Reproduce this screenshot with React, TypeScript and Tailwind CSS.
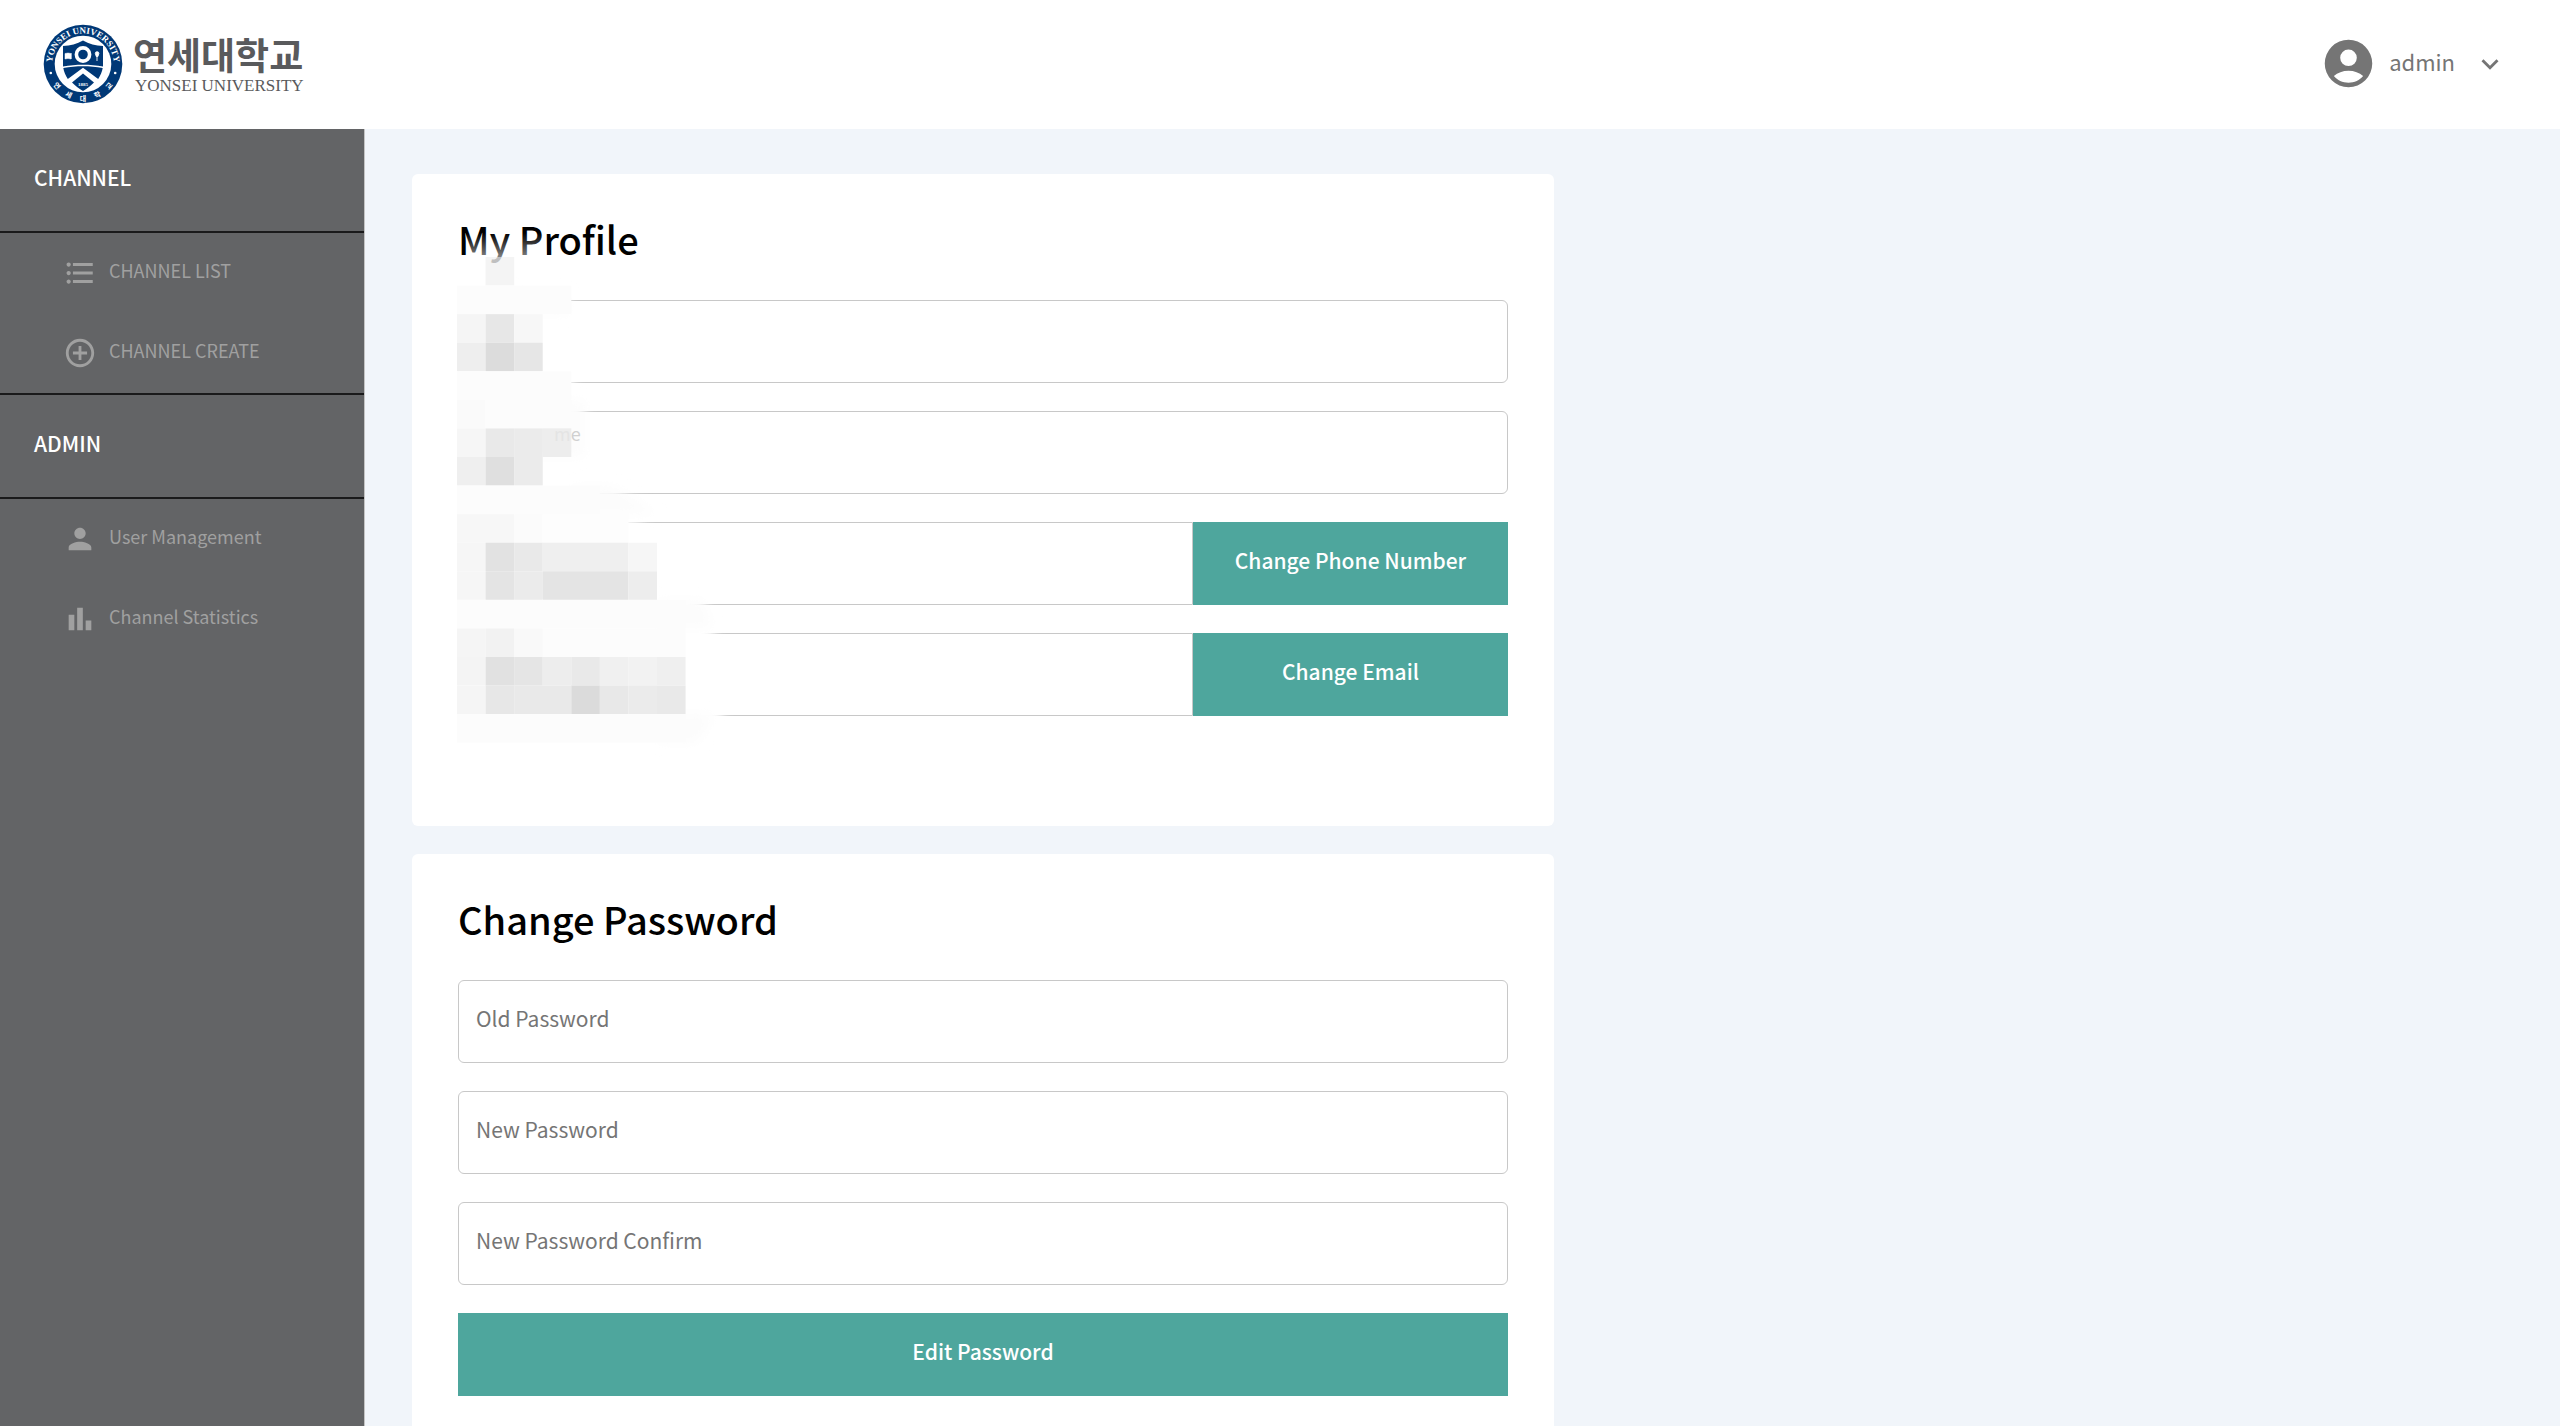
import type { ReactNode } from "react";
import { MdAddCircleOutline, MdExpandMore, MdFormatListBulleted, MdPerson } from "react-icons/md";

const BarChartIcon = () => (
  <svg viewBox="0 0 24 24" className="size-[34px]" fill="currentColor" aria-hidden="true">
    <path d="M4 9h4v11H4zm12 4h4v7h-4zm-6-9h4v16h-4z" />
  </svg>
);

const AccountIcon = () => (
  <svg viewBox="0 0 24 24" className="size-[57px]" fill="currentColor" fillRule="evenodd" aria-hidden="true">
    <path d="M12 2a10 10 0 1 0 0 20 10 10 0 0 0 0-20zm0 4.1a3.5 3.5 0 1 1 0 7 3.5 3.5 0 0 1 0-7zM5.85 17.3C7.4 15.8 9.6 15 12 15s4.6.8 6.15 2.3C16.7 19.1 14.5 20.1 12 20.1s-4.7-1-6.15-2.8z" />
  </svg>
);

const ringLetters: [string, number][] = [
  ["연", 50],
  ["세", 25],
  ["대", 0],
  ["학", -25],
  ["교", -50],
];

const Emblem = () => (
  <svg viewBox="0 0 80 80" className="size-20" aria-hidden="true">
    <defs>
      <path id="arcTop" d="M9.5 46 A31 31 0 1 1 70.5 46" />
    </defs>
    <circle cx="40" cy="40" r="39.3" fill="#003876" />
    <circle cx="40" cy="40" r="28.3" fill="#fff" />
    <text fill="#fff" fontSize="9" fontWeight="700" fontFamily="Liberation Serif, serif" textAnchor="middle">
      <textPath href="#arcTop" startOffset="50%">YONSEI UNIVERSITY</textPath>
    </text>
    {ringLetters.map(([letter, angle]) => (
      <text
        key={letter}
        x="40"
        y="76.5"
        transform={`rotate(${angle} 40 40)`}
        fill="#fff"
        fontSize="7"
        fontWeight="700"
        fontFamily="Noto Sans CJK KR, sans-serif"
        textAnchor="middle"
      >
        {letter}
      </text>
    ))}
    <circle cx="7.8" cy="49" r="1.3" fill="#fff" />
    <circle cx="72.2" cy="49" r="1.3" fill="#fff" />
    <path d="M40 16.5c6 3.6 12.6 5.300 20 5.5v20.5c-13-2.500-27-2.500-40 0V22c7.400-.2 14-1.900 20-5.500z" fill="#003876" />
    <path d="M20.300 44c13-2.200 26.400-2.200 39.400 0-.6 3.800-2.200 7-4.500 11L40 43.800 24.800 55c-2.300-4-3.900-7.200-4.500-11z" fill="#003876" />
    <path d="M40 49.500 51 58.500C47.500 62 43.800 65 40 67c-3.800-2-7.500-5-11-8.500z" fill="#003876" />
    <circle cx="40" cy="30.5" r="6.6" fill="none" stroke="#fff" strokeWidth="3.6" />
    <path d="M22 29.500l3-.5 3 .5v5.500l-3-.5-3 .5zM28.500 29v6" stroke="#fff" strokeWidth=".5" fill="#fff" />
    <path d="M54 32v5M52.300 29.500a1.800 1.800 0 1 1 3.600 0l-1 3h-1.600z" stroke="#fff" strokeWidth=".9" fill="#fff" />
    <text x="40" y="61.5" fill="#fff" fontSize="5" fontWeight="700" fontFamily="Liberation Serif, serif" textAnchor="middle">1885</text>
  </svg>
);

const Header = () => (
  <header className="flex h-[129px] items-center justify-between bg-white pr-[53px] pb-[2px] pl-[43px]">
    <a href="#" className="flex items-center gap-[10px] text-[#595a5c]">
      <Emblem />
      <span className="flex flex-col pt-[6px]">
        <span className="font-['Liberation_Sans','Noto_Sans_CJK_KR',sans-serif] text-[37px] leading-[38px] font-bold">
          연세대학교
        </span>
        <span className="pl-[2px] font-['Liberation_Serif',serif] text-[17px] leading-[18px]">YONSEI UNIVERSITY</span>
      </span>
    </a>
    <button type="button" className="flex items-center text-[#757575]">
      <AccountIcon />
      <span className="ml-3 pb-[6px] text-[22px] leading-8">admin</span>
      <MdExpandMore className="ml-[18px] size-[34px]" />
    </button>
  </header>
);

const NavSection = ({ title, children }: { title: string; children: ReactNode }) => (
  <section>
    <h2 className="flex h-[104px] items-center border-b-2 border-[#1a1a1b] pb-[6px] pl-[34px] text-[21px] leading-8 font-medium text-white">
      {title}
    </h2>
    <ul>{children}</ul>
  </section>
);

const NavItem = ({ icon, label }: { icon: ReactNode; label: string }) => (
  <li>
    <a href="#" className="flex h-20 items-center gap-3 pl-[63px] text-[#a0a0a0]">
      {icon}
      <span className="pb-[6px] text-[18px] leading-6">{label}</span>
    </a>
  </li>
);

const Sidebar = () => (
  <nav className="w-[365px] shrink-0 border-r border-[#c4c4c4] bg-[#636466]">
    <NavSection title="CHANNEL">
      <NavItem icon={<MdFormatListBulleted className="size-[34px]" />} label="CHANNEL LIST" />
      <NavItem icon={<MdAddCircleOutline className="size-[34px]" />} label="CHANNEL CREATE" />
    </NavSection>
    <div className="border-t-2 border-[#1a1a1b]">
      <NavSection title="ADMIN">
        <NavItem icon={<MdPerson className="size-[34px]" />} label="User Management" />
        <NavItem icon={<BarChartIcon />} label="Channel Statistics" />
      </NavSection>
    </div>
  </nav>
);

const CELL = 200 / 7;

// column, row, columns wide, shade
const cells: [number, number, number, string][] = [
  [1, 0, 1, "#f0f0f0"],
  [0, 1, 4, "#fcfcfc"],
  [0, 2, 1, "#f5f5f5"], [1, 2, 1, "#e7e7e7"], [2, 2, 1, "#f7f7f7"],
  [0, 3, 1, "#eeeeee"], [1, 3, 1, "#dcdcdc"], [2, 3, 1, "#e6e6e6"],
  [0, 4, 4, "#fcfcfc"],
  [0, 5, 1, "#fafafa"], [1, 5, 3, "#fcfcfc"],
  [0, 6, 1, "#f6f6f6"], [1, 6, 1, "#e9e9e9"], [2, 6, 1, "#ebebeb"], [3, 6, 1, "#e9e9e9"],
  [0, 7, 1, "#efefef"], [1, 7, 1, "#dfdfdf"], [2, 7, 1, "#ebebeb"],
  [0, 8, 5, "#fcfcfc"],
  [0, 9, 2, "#f7f7f7"], [2, 9, 1, "#fbfbfb"], [3, 9, 3, "#fdfdfd"],
  [0, 10, 1, "#f6f6f6"], [1, 10, 1, "#e2e2e2"], [2, 10, 1, "#e9e9e9"], [3, 10, 3, "#efefef"], [6, 10, 1, "#f6f6f6"],
  [0, 11, 1, "#f6f6f6"], [1, 11, 1, "#e4e4e4"], [2, 11, 1, "#ebebeb"], [3, 11, 3, "#e4e4e4"], [6, 11, 1, "#ededed"],
  [0, 12, 8, "#fcfcfc"],
  [0, 13, 1, "#f5f5f5"], [1, 13, 1, "#f2f2f2"], [2, 13, 1, "#f9f9f9"], [3, 13, 5, "#fcfcfc"],
  [0, 14, 1, "#f4f4f4"], [1, 14, 1, "#e1e1e1"], [2, 14, 1, "#e5e5e5"], [3, 14, 1, "#ededed"],
  [4, 14, 1, "#e9e9e9"], [5, 14, 1, "#f0f0f0"], [6, 14, 1, "#f2f2f2"], [7, 14, 1, "#efefef"],
  [0, 15, 1, "#f5f5f5"], [1, 15, 1, "#e7e7e7"], [2, 15, 2, "#e9e9e9"],
  [4, 15, 1, "#dbdbdb"], [5, 15, 1, "#e8e8e8"], [6, 15, 1, "#ebebeb"], [7, 15, 1, "#e9e9e9"],
  [0, 16, 8, "#fcfcfc"],
];

// Pixelated cover over the personal details
const Redaction = () => (
  <svg width="320" height="540" className="pointer-events-none absolute top-[53px] left-[25px]" aria-hidden="true">
    <defs>
      <linearGradient id="fade" x1="0" y1="0" x2="0" y2="1">
        <stop offset="0" stopColor="#fff" stopOpacity="0" />
        <stop offset="1" stopColor="#fff" stopOpacity=".5" />
      </linearGradient>
      <filter id="soft" x="-10%" y="-10%" width="120%" height="120%">
        <feGaussianBlur stdDeviation="6" />
      </filter>
    </defs>
    <g transform="translate(20 30)">
      <rect x="10" y="-24" width="80" height="24" fill="url(#fade)" />
      <path d="M-8 34H104L116 125V190L136 245L184 267L242 345L258 378L266 470H-8z" fill="#fff" filter="url(#soft)" />
      <path d="M57 34H108L114 57H57zM57 143H128V200H57zM114 229L156 229L200 257H114zM200 343H246L256 371H200zM200 457H258L240 486H200z" fill="#fcfcfc" filter="url(#soft)" />
      <text x="97" y="184" fontSize="18" fill="#d0d0d0">me</text>
      <rect x={CELL} y="0" width={CELL} height={CELL} fill="#fff" opacity=".3" />
      {cells.map(([col, row, span, shade]) => (
        <rect
          key={`${col}-${row}`}
          x={col * CELL}
          y={row * CELL}
          width={span * CELL}
          height={CELL}
          fill={shade}
          opacity={row === 0 ? 0.7 : col === 3 && row === 6 ? 0.8 : 1}
        />
      ))}
    </g>
  </svg>
);

const Card = ({ title, children }: { title: string; children: ReactNode }) => (
  <section className="relative w-full max-w-[1142px] rounded-md bg-white px-[46px] pt-9">
    <h1 className="text-[38px] leading-[58px] font-medium text-black">{title}</h1>
    {children}
  </section>
);

const fieldClass =
  "h-[83px] w-full min-w-0 rounded-md border border-[#c8c8c8] bg-white px-[17px] pb-2 text-[21px] text-black outline-none placeholder:text-[#757575]";
const buttonClass = "h-[83px] bg-[#4ea69d] pb-[6px] text-[21px] font-medium text-white";

const ProfileField = ({ label, action }: { label: string; action?: string }) => (
  <div className="flex">
    <input type="text" aria-label={label} className={action ? `${fieldClass} rounded-r-none` : fieldClass} />
    {action && (
      <button type="button" className={`${buttonClass} w-[30%] shrink-0`}>
        {action}
      </button>
    )}
  </div>
);

export default function App() {
  return (
    <div className="flex min-h-screen flex-col bg-[#f1f5fa] font-['Noto_Sans_CJK_KR',sans-serif]">
      <Header />
      <div className="flex flex-1">
        <Sidebar />
        <main className="flex flex-1 flex-col gap-7 pt-[45px] pb-[46px] pl-[47px]">
          <Card title="My Profile">
            <form className="mt-8 flex flex-col gap-7 pb-[110px]">
              <ProfileField label="ID" />
              <ProfileField label="Name" />
              <ProfileField label="Phone number" action="Change Phone Number" />
              <ProfileField label="Email" action="Change Email" />
            </form>
            <Redaction />
          </Card>
          <Card title="Change Password">
            <form className="mt-8 flex flex-col gap-7 pb-[46px]">
              <input type="password" aria-label="Old Password" placeholder="Old Password" className={fieldClass} />
              <input type="password" aria-label="New Password" placeholder="New Password" className={fieldClass} />
              <input
                type="password"
                aria-label="New Password Confirm"
                placeholder="New Password Confirm"
                className={fieldClass}
              />
              <button type="submit" className={buttonClass}>
                Edit Password
              </button>
            </form>
          </Card>
        </main>
      </div>
    </div>
  );
}
